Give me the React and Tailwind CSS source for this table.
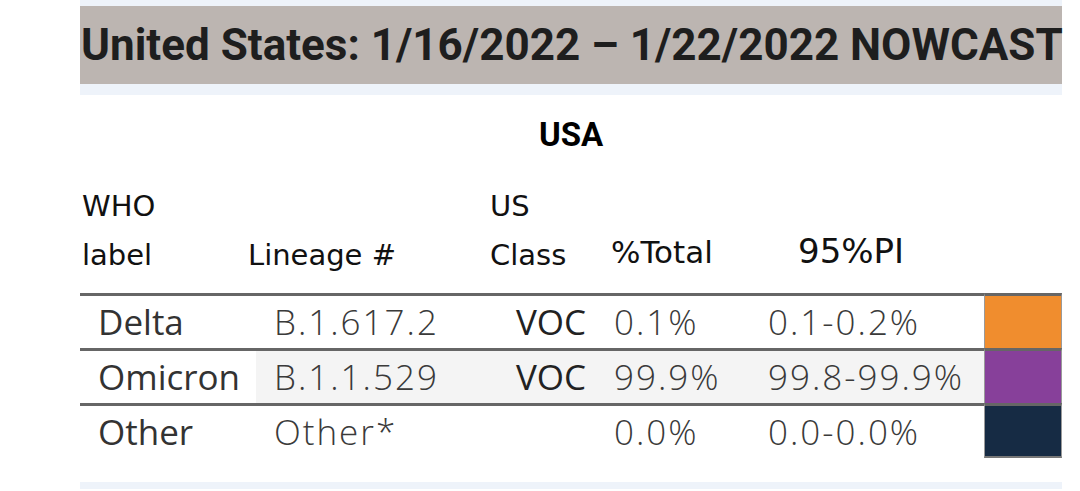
const rows = [
  { name: "Delta", lineage: "B.1.617.2", cls: "VOC", total: "0.1%", pi: "0.1-0.2%", color: "bg-[#f08d2e]", shade: false },
  { name: "Omicron", lineage: "B.1.1.529", cls: "VOC", total: "99.9%", pi: "99.8-99.9%", color: "bg-[#87409a]", shade: true },
  { name: "Other", lineage: "Other*", cls: "", total: "0.0%", pi: "0.0-0.0%", color: "bg-[#162b44]", shade: false },
];

const dataFont = { fontFamily: "'Open Sans', 'Noto Sans', sans-serif" };

const Row = ({ row, last }) => (
  <div className="flex h-[55px]">
    <div className="flex w-[904px] border-t-[3px] border-[#666666] text-[35px]" style={dataFont}>
      <div className="flex w-[176px] items-center pl-[18px] text-[#333333]">{row.name}</div>
      <div className={`flex w-[728px] ${row.shade ? "bg-[#f4f4f4]" : ""}`}>
        <div className="flex w-[242px] items-center pl-[18px] font-light tracking-[2px] text-[#3a3a3a]">{row.lineage}</div>
        <div className="flex w-[99px] items-center pl-[18px] text-[#222222]">{row.cls}</div>
        <div className="flex w-[153px] items-center pl-[17px] font-light tracking-[2px] text-[#3a3a3a]">{row.total}</div>
        <div className="flex w-[234px] items-center pl-[18px] font-light tracking-[2px] text-[#3a3a3a]">{row.pi}</div>
      </div>
    </div>
    <div
      className={`w-[78px] border-t-[3px] border-x border-t-[#666666] border-x-[#9a9a9a] ${row.color} ${last ? "border-b-2 border-b-[#777777]" : ""}`}
    />
  </div>
);

export default function App() {
  return (
    <div className="h-[491px] w-[1080px] overflow-hidden bg-white">
      <div className="ml-[80px] flex w-[982px] flex-col">
        <div className="h-[6px] bg-[#eef3fa]" />
        <div
          className="flex h-[78px] items-center whitespace-nowrap bg-[#bcb5b1] pl-[1px] text-[44px] font-bold text-[#1e1e1e]"
          style={{ fontFamily: "Roboto, 'Liberation Sans', sans-serif" }}
        >
          United States: 1/16/2022 – 1/22/2022 NOWCAST
        </div>
        <div className="h-[11px] bg-[#eef3fa]" />

        <div
          className="mt-[23px] text-center text-[33px] font-bold leading-none text-black"
          style={{ fontFamily: "Roboto, 'Liberation Sans', sans-serif" }}
        >
          USA
        </div>

        <div
          className="mt-[31px] flex items-end leading-[49px] text-[#111111]"
          style={{ fontFamily: "'DejaVu Sans', sans-serif" }}
        >
          <div className="w-[168px] pl-[2px] text-[29px]">
            WHO
            <br />
            label
          </div>
          <div className="w-[242px] text-[29px]">Lineage #</div>
          <div className="w-[121px] text-[29px]">
            US
            <br />
            Class
          </div>
          <div className="w-[187px] pb-[3px] text-[31px]">%Total</div>
          <div className="pb-[4px] text-[34px]">95%PI</div>
        </div>

        <div className="mt-[13px] flex flex-col">
          {rows.map((row, i) => (
            <Row key={row.name} row={row} last={i === rows.length - 1} />
          ))}
        </div>

        <div className="mt-[24px] h-[7px] bg-[#eef3fa]" />
      </div>
    </div>
  );
}
